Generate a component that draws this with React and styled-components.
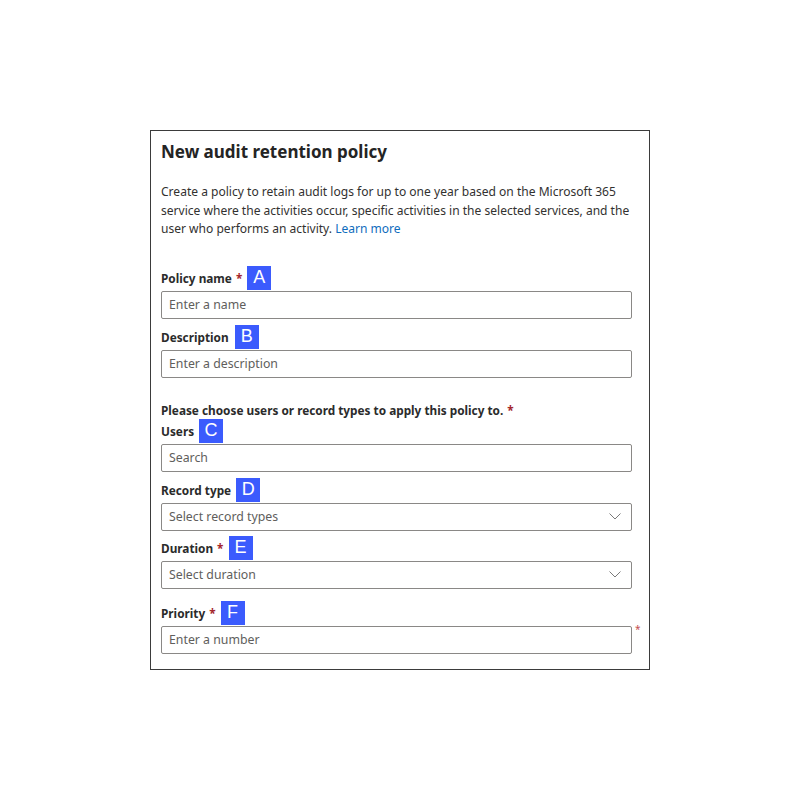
import styled, { createGlobalStyle } from "styled-components";

const GlobalStyle = createGlobalStyle`
    body {
        margin: 0;
        background: #ffffff;
        font-family: "Noto Sans", "Open Sans", sans-serif;
        color: #323130;
    }
`;

const StPage = styled.div`
    padding: 130px 0 0 150px;
`;
const StCard = styled.div`
    box-sizing: border-box;
    width: 500px;
    height: 540px;
    border: 1px solid #3b3b3b;
    padding: 10px 10px 0;
`;
const StTitle = styled.h2`
    margin: 0;
    font-size: 17px;
    line-height: 22px;
    font-weight: 700;
    color: #242424;
`;
const StIntro = styled.p`
    margin: 20px 0 0;
    font-size: 12.05px;
    line-height: 18.5px;
    color: #323130;
    white-space: nowrap;
`;
const StLink = styled.a`
    color: #0f6cbd;
    text-decoration: none;
`;
const StForm = styled.div`
    display: flex;
    flex-direction: column;
    margin-top: 27px;
`;
const StField = styled.div`
    display: flex;
    flex-direction: column;
    gap: 1px;
    margin-top: ${(p) => p.$top || 0}px;
`;
const StLabelRow = styled.div`
    display: flex;
    align-items: center;
    height: 24px;
    font-size: 11.8px;
    font-weight: 700;
    color: #2b2b2b;
`;
const StStar = styled.span`
    color: #a4262c;
    margin-left: 4px;
`;
const StBadge = styled.span`
    display: inline-flex;
    align-items: center;
    justify-content: center;
    width: 24px;
    height: 24px;
    margin-left: ${(p) => p.$gap || 5}px;
    background: #3b5bfd;
    color: #ffffff;
    font-family: "Liberation Sans", sans-serif;
    font-weight: 400;
    font-size: 18px;
`;
const StBoxRow = styled.div`
    display: flex;
    align-items: flex-start;
`;
const StBox = styled.div`
    box-sizing: border-box;
    flex-shrink: 0;
    width: 471px;
    height: 28px;
    border: 1px solid #8a8886;
    border-radius: 2px;
    display: flex;
    align-items: center;
    justify-content: space-between;
    padding: 0 10px 0 7px;
    font-size: 12.3px;
    color: #605e5c;
`;
const StSideStar = styled.span`
    color: #c4504f;
    font-size: 10px;
    margin: -4px 0 0 3px;
`;
const StPrompt = styled.div`
    margin-top: 23px;
    height: 18px;
    line-height: 18px;
    font-size: 11.8px;
    font-weight: 700;
    color: #2b2b2b;
`;

const Chevron = () => (
    <svg width="12" height="7" viewBox="0 0 12 7" fill="none">
        <path d="M0.5 0.5 L6 6 L11.5 0.5" stroke="#7a7a7a" strokeWidth="1" />
    </svg>
);

const Field = ({ label, letter, required, gap, top, placeholder, select, sideStar }) => (
    <StField $top={top}>
        <StLabelRow>
            {label}
            {required && <StStar>*</StStar>}
            <StBadge $gap={gap}>{letter}</StBadge>
        </StLabelRow>
        <StBoxRow>
            <StBox>
                <span>{placeholder}</span>
                {select && <Chevron />}
            </StBox>
            {sideStar && <StSideStar>*</StSideStar>}
        </StBoxRow>
    </StField>
);

export default function App() {
    return (
        <StPage>
            <GlobalStyle />
            <StCard>
                <StTitle>New audit retention policy</StTitle>
                <StIntro>
                    Create a policy to retain audit logs for up to one year based on the Microsoft 365
                    <br />
                    service where the activities occur, specific activities in the selected services, and the
                    <br />
                    user who performs an activity. <StLink href="#">Learn more</StLink>
                </StIntro>
                <StForm>
                    <Field label="Policy name" letter="A" required placeholder="Enter a name" />
                    <Field label="Description" letter="B" gap={6} top={6} placeholder="Enter a description" />
                    <StPrompt>
                        Please choose users or record types to apply this policy to.
                        <StStar>*</StStar>
                    </StPrompt>
                    <Field label="Users" letter="C" placeholder="Search" />
                    <Field label="Record type" letter="D" top={6} placeholder="Select record types" select />
                    <Field label="Duration" letter="E" required top={5} placeholder="Select duration" select />
                    <Field label="Priority" letter="F" required top={12} placeholder="Enter a number" sideStar />
                </StForm>
            </StCard>
        </StPage>
    );
}
